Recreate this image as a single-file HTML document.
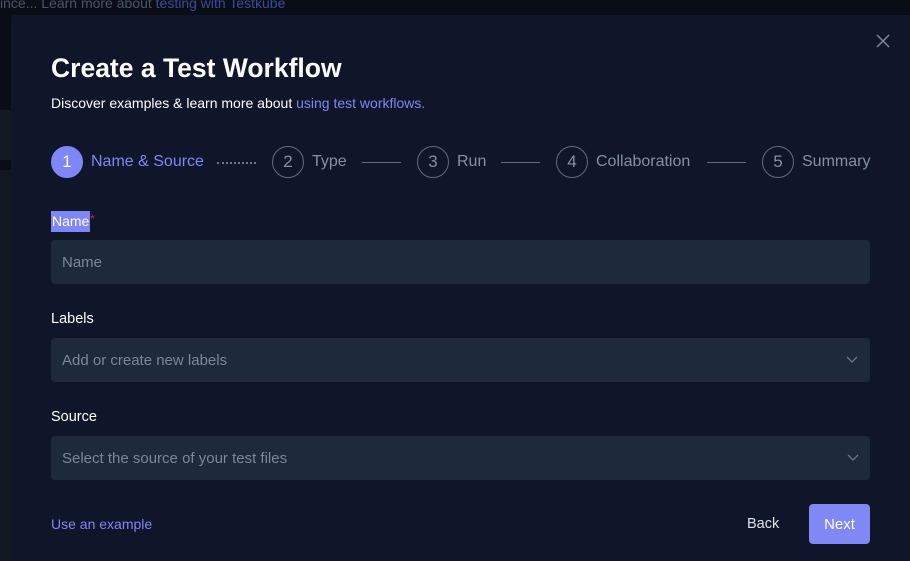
<!DOCTYPE html>
<html><head><meta charset="utf-8"><style>
*{margin:0;padding:0;box-sizing:border-box}
body{width:910px;height:561px;overflow:hidden;background:#090d16;font-family:"Liberation Sans",Arial,sans-serif;position:relative}
.a{position:absolute;white-space:nowrap}
.modal{position:absolute;left:11px;top:15px;width:899px;height:546px;background:#0f1629;border-top-left-radius:4px}
.c{position:absolute;width:32px;height:32px;border-radius:50%;border:1.5px solid #5f6c82;color:#8390a5;font-size:17px;line-height:29px;text-align:center;top:146px}
.lbl{position:absolute;top:153px;font-size:16px;color:#8390a5}
.ln{position:absolute;top:162px;height:1px;background:#5f6c82;width:39px}
.inp{position:absolute;left:51px;width:819px;height:44px;background:#1e293b;border-radius:4px;color:#7a879b;font-size:15px;padding-left:11px;line-height:45px}
.fl{position:absolute;left:51px;color:#fff;font-size:14.5px}
</style></head><body>
<div class="a" style="left:0;top:-5px;font-size:14px;color:#4b5567">ince... Learn more about <span style="color:#3f4a9a">testing with Testkube</span></div>
<div class="a" style="left:0;top:110px;width:11px;height:50px;background:#141a24"></div>
<div class="a" style="left:0;top:220px;font-size:17px;color:#8a93a3">o</div>
<div class="a" style="left:0;top:270px;font-size:11px;color:#5b6474">ble</div>
<div class="a" style="left:0;top:326px;font-size:17px;color:#8a93a3">3.</div>
<div class="a" style="left:0;top:537px;font-size:17px;color:#8a93a3">m</div>
<div class="a" style="left:0;top:170px;width:11px;height:391px;background:#121821"></div>
<div class="modal"></div>
<svg class="a" style="left:876px;top:34px" width="14" height="14"><path d="M1 1L13 13M13 1L1 13" stroke="#7c889b" stroke-width="1.5"/></svg>
<div class="a" style="left:51px;top:53px;font-size:26.5px;font-weight:bold;color:#fff">Create a Test Workflow</div>
<div class="a" style="left:51px;top:95px;font-size:14px;color:#fff">Discover examples &amp; learn more about <span style="color:#7f86f5">using test workflows.</span></div>
<div class="c" style="left:51px;background:#7f86f5;border-color:#7f86f5;color:#fff">1</div>
<div class="lbl" style="left:91px;color:#7f86f5">Name &amp; Source</div>
<div class="ln" style="left:217px;background:none;border-top:2px dotted #6b778b;height:0"></div>
<div class="c" style="left:272px">2</div><div class="lbl" style="left:312px">Type</div>
<div class="ln" style="left:362px"></div>
<div class="c" style="left:417px">3</div><div class="lbl" style="left:457px">Run</div>
<div class="ln" style="left:501px"></div>
<div class="c" style="left:556px">4</div><div class="lbl" style="left:596px">Collaboration</div>
<div class="ln" style="left:707px"></div>
<div class="c" style="left:762px">5</div><div class="lbl" style="left:802px">Summary</div>
<div class="fl" style="top:211px;height:21px;line-height:21px;background:#7f86f5;padding:0 1px;left:51px;font-size:14px">Name</div><div class="a" style="left:90px;top:212px;color:#e11d48;font-size:12px">*</div>
<div class="inp" style="top:240px">Name</div>
<div class="fl" style="top:311px">Labels</div>
<div class="inp" style="top:338px">Add or create new labels</div>
<div class="fl" style="top:409px">Source</div>
<div class="inp" style="top:436px">Select the source of your test files</div>
<svg class="a" style="left:846px;top:356px" width="12" height="8"><path d="M1 1L6 6L11 1" stroke="#6b778b" stroke-width="1.3" fill="none"/></svg>
<svg class="a" style="left:847px;top:454px" width="12" height="8"><path d="M1 1L6 6L11 1" stroke="#6b778b" stroke-width="1.3" fill="none"/></svg>
<div class="a" style="left:51px;top:516px;font-size:14px;color:#7f86f5">Use an example</div>
<div class="a" style="left:747px;top:516px;font-size:14.5px;color:#dfe3ea">Back</div>
<div class="a" style="left:809px;top:504px;width:61px;height:40px;background:#8088f6;border-radius:4px;color:#fff;font-size:15px;line-height:41px;text-align:center">Next</div>
</body></html>
